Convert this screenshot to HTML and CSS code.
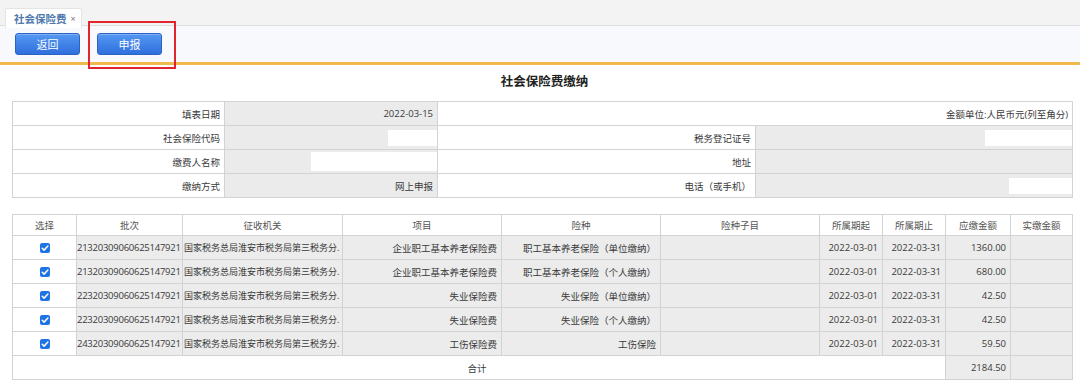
FILE: index.html
```html
<!DOCTYPE html>
<html lang="zh-CN">
<head>
  <meta charset="UTF-8">
  <meta name="viewport" content="width=device-width, initial-scale=1.0">
  <title>社会保险费</title>
  <link rel="stylesheet" href="styles.css">
</head>
<body>
  <div class="tabbar">
    <div class="tab"><span class="tab-name">社会保险费</span><span class="tab-close">×</span></div>
  </div>

  <div class="toolbar">
    <button class="btn">返回</button>
    <button class="btn">申报</button>
  </div>
  <!-- 标注框 -->
  <div class="mark"></div>

  <div class="sheet">
    <h1 class="title">社会保险费缴纳</h1>

    <table class="info">
      <colgroup>
        <col style="width:212px"><col style="width:213px"><col style="width:318px"><col>
      </colgroup>
      <tr>
        <td>填表日期</td>
        <td class="val">2022-03-15</td>
        <td colspan="2">金额单位:人民币元(列至角分)</td>
      </tr>
      <tr>
        <td>社会保险代码</td>
        <td class="val blank-cell"><span class="blank" style="width:49px"></span></td>
        <td>税务登记证号</td>
        <td class="val blank-cell"><span class="blank" style="width:87px"></span></td>
      </tr>
      <tr>
        <td>缴费人名称</td>
        <td class="val blank-cell"><span class="blank tall" style="width:126px"></span></td>
        <td>地址</td>
        <td class="val"></td>
      </tr>
      <tr>
        <td>缴纳方式</td>
        <td class="val">网上申报</td>
        <td>电话（或手机）</td>
        <td class="val blank-cell"><span class="blank" style="width:63px"></span></td>
      </tr>
    </table>

    <table class="list">
      <colgroup>
        <col style="width:64px"><col style="width:106px"><col style="width:160px"><col style="width:159px">
        <col style="width:159px"><col style="width:159px"><col style="width:63px"><col style="width:63px">
        <col style="width:65px"><col>
      </colgroup>
      <thead>
        <tr>
          <th>选择</th><th>批次</th><th>征收机关</th><th>项目</th><th>险种</th>
          <th>险种子目</th><th>所属期起</th><th>所属期止</th><th>应缴金额</th><th>实缴金额</th>
        </tr>
      </thead>
      <tbody>
        <tr>
          <td class="pick"><span class="check"><svg viewBox="0 0 10 10"><path d="M2.2 5.2 L4.2 7.1 L7.9 3" /></svg></span></td>
          <td class="batch">21320309060625147921</td>
          <td class="office">国家税务总局淮安市税务局第三税务分.</td>
          <td>企业职工基本养老保险费</td>
          <td>职工基本养老保险（单位缴纳）</td>
          <td></td>
          <td>2022-03-01</td><td>2022-03-31</td><td>1360.00</td><td></td>
        </tr>
        <tr>
          <td class="pick"><span class="check"><svg viewBox="0 0 10 10"><path d="M2.2 5.2 L4.2 7.1 L7.9 3" /></svg></span></td>
          <td class="batch">21320309060625147921</td>
          <td class="office">国家税务总局淮安市税务局第三税务分.</td>
          <td>企业职工基本养老保险费</td>
          <td>职工基本养老保险（个人缴纳）</td>
          <td></td>
          <td>2022-03-01</td><td>2022-03-31</td><td>680.00</td><td></td>
        </tr>
        <tr>
          <td class="pick"><span class="check"><svg viewBox="0 0 10 10"><path d="M2.2 5.2 L4.2 7.1 L7.9 3" /></svg></span></td>
          <td class="batch">22320309060625147921</td>
          <td class="office">国家税务总局淮安市税务局第三税务分.</td>
          <td>失业保险费</td>
          <td>失业保险（单位缴纳）</td>
          <td></td>
          <td>2022-03-01</td><td>2022-03-31</td><td>42.50</td><td></td>
        </tr>
        <tr>
          <td class="pick"><span class="check"><svg viewBox="0 0 10 10"><path d="M2.2 5.2 L4.2 7.1 L7.9 3" /></svg></span></td>
          <td class="batch">22320309060625147921</td>
          <td class="office">国家税务总局淮安市税务局第三税务分.</td>
          <td>失业保险费</td>
          <td>失业保险（个人缴纳）</td>
          <td></td>
          <td>2022-03-01</td><td>2022-03-31</td><td>42.50</td><td></td>
        </tr>
        <tr>
          <td class="pick"><span class="check"><svg viewBox="0 0 10 10"><path d="M2.2 5.2 L4.2 7.1 L7.9 3" /></svg></span></td>
          <td class="batch">24320309060625147921</td>
          <td class="office">国家税务总局淮安市税务局第三税务分.</td>
          <td>工伤保险费</td>
          <td>工伤保险</td>
          <td></td>
          <td>2022-03-01</td><td>2022-03-31</td><td>59.50</td><td></td>
        </tr>
        <tr class="sum">
          <td colspan="8" class="sum-label">合计</td>
          <td class="val">2184.50</td>
          <td class="val"></td>
        </tr>
      </tbody>
    </table>
  </div>
</body>
</html>
```

FILE: styles.css
```css
*{
  margin:0;
  padding:0;
  box-sizing: border-box;
}
body{
  width:1080px;
  height:386px;
  overflow:hidden;
  background:#fff;
  font-family: "Open Sans", "Noto Sans CJK SC", sans-serif;
  color:#3a3a3a;
  position: relative;
}

/* 顶部标签栏 */
.tabbar{
  height:26px;
  background:#f3f3f3;
  border-bottom:1px solid #dedede;
  padding:6px 0 0 5px;
}
.tab{
  display:inline-flex;
  align-items:center;
  height:20px;
  width:77px;
  padding:0 0 0 8px;
  background:#fff;
  border:1px solid #e4e4e4;
  border-bottom:none;
  border-radius:2px 2px 0 0;
  .tab-name{
    font-size:10.5px;
    font-weight:bold;
    color:#5078ad;
    font-family:"Noto Sans CJK SC", sans-serif;
  }
  .tab-close{
    font-size:9px;
    color:#777;
    margin-left:4px;
  }
}

.toolbar{
  height:39px;
  background:#f7f9fd;
  padding:7px 0 0 15px;
  display:flex;
  align-items:flex-start;
  gap:17px;
  border-bottom:3px solid #f1b84c;
}
.btn{
  width:65px;
  height:22px;
  border:1px solid #2c62c2;
  border-radius:3px;
  background:linear-gradient(#5598f3, #2f6fdd);
  color:#fff;
  font-family:"Noto Sans CJK SC", sans-serif;
  font-size:11px;
  box-shadow: inset 0 1px 0 rgba(255,255,255,.25);
}

.mark{
  position:absolute;
  left:88px;
  top:21px;
  width:88px;
  height:48px;
  border:2px solid #e1242d;
}

.sheet{
  padding:0 7px 0 12px;
}
.title{
  font-family:"Noto Sans CJK SC", sans-serif;
  font-size:12.5px;
  font-weight:bold;
  color:#222;
  text-align:center;
  line-height:20px;
  margin:6px 0 10px;
  padding-left:4px;
}

table{
  width:100%;
  border-collapse:collapse;
  table-layout:fixed;
  font-size:9.5px;
}
td, th{
  border:1px solid #d3d3d3;
  padding:0 4px;
  text-align:right;
  white-space:nowrap;
  overflow:hidden;
  font-weight:normal;
}

.info{
  td{ height:24px; }
  .val{ background:#ebebeb; }
  .blank-cell{ padding-right:0; line-height:0; }
  .blank{
    display:inline-block;
    height:16px;
    background:#fff;
    vertical-align:middle;
    &.tall{ height:19px; }
  }
}

.list{
  margin-top:16px;
  th{
    height:21px;
    text-align:center;
    color:#555;
    background:#fff;
  }
  tbody td{
    height:24px;
    background:#ececec;
  }
  .pick{
    background:#fff;
    text-align:center;
    line-height:0;
  }
  .batch{
    text-align:left;
    padding:0;
    letter-spacing:-0.25px;
  }
  .office{
    text-align:left;
    padding:0 0 0 1px;
    font-size:9px;
  }
  .sum td{ background:#fff; }
  .sum .val{ background:#ececec; }
  .sum-label{ text-align:center; padding-left:0; }
}

.check{
  display:inline-block;
  width:10px;
  height:10px;
  border-radius:2px;
  background:#1f74e4;
  svg{
    width:10px;
    height:10px;
    display:block;
  }
  path{
    fill:none;
    stroke:#fff;
    stroke-width:1.5;
    stroke-linecap:round;
    stroke-linejoin:round;
  }
}
```
